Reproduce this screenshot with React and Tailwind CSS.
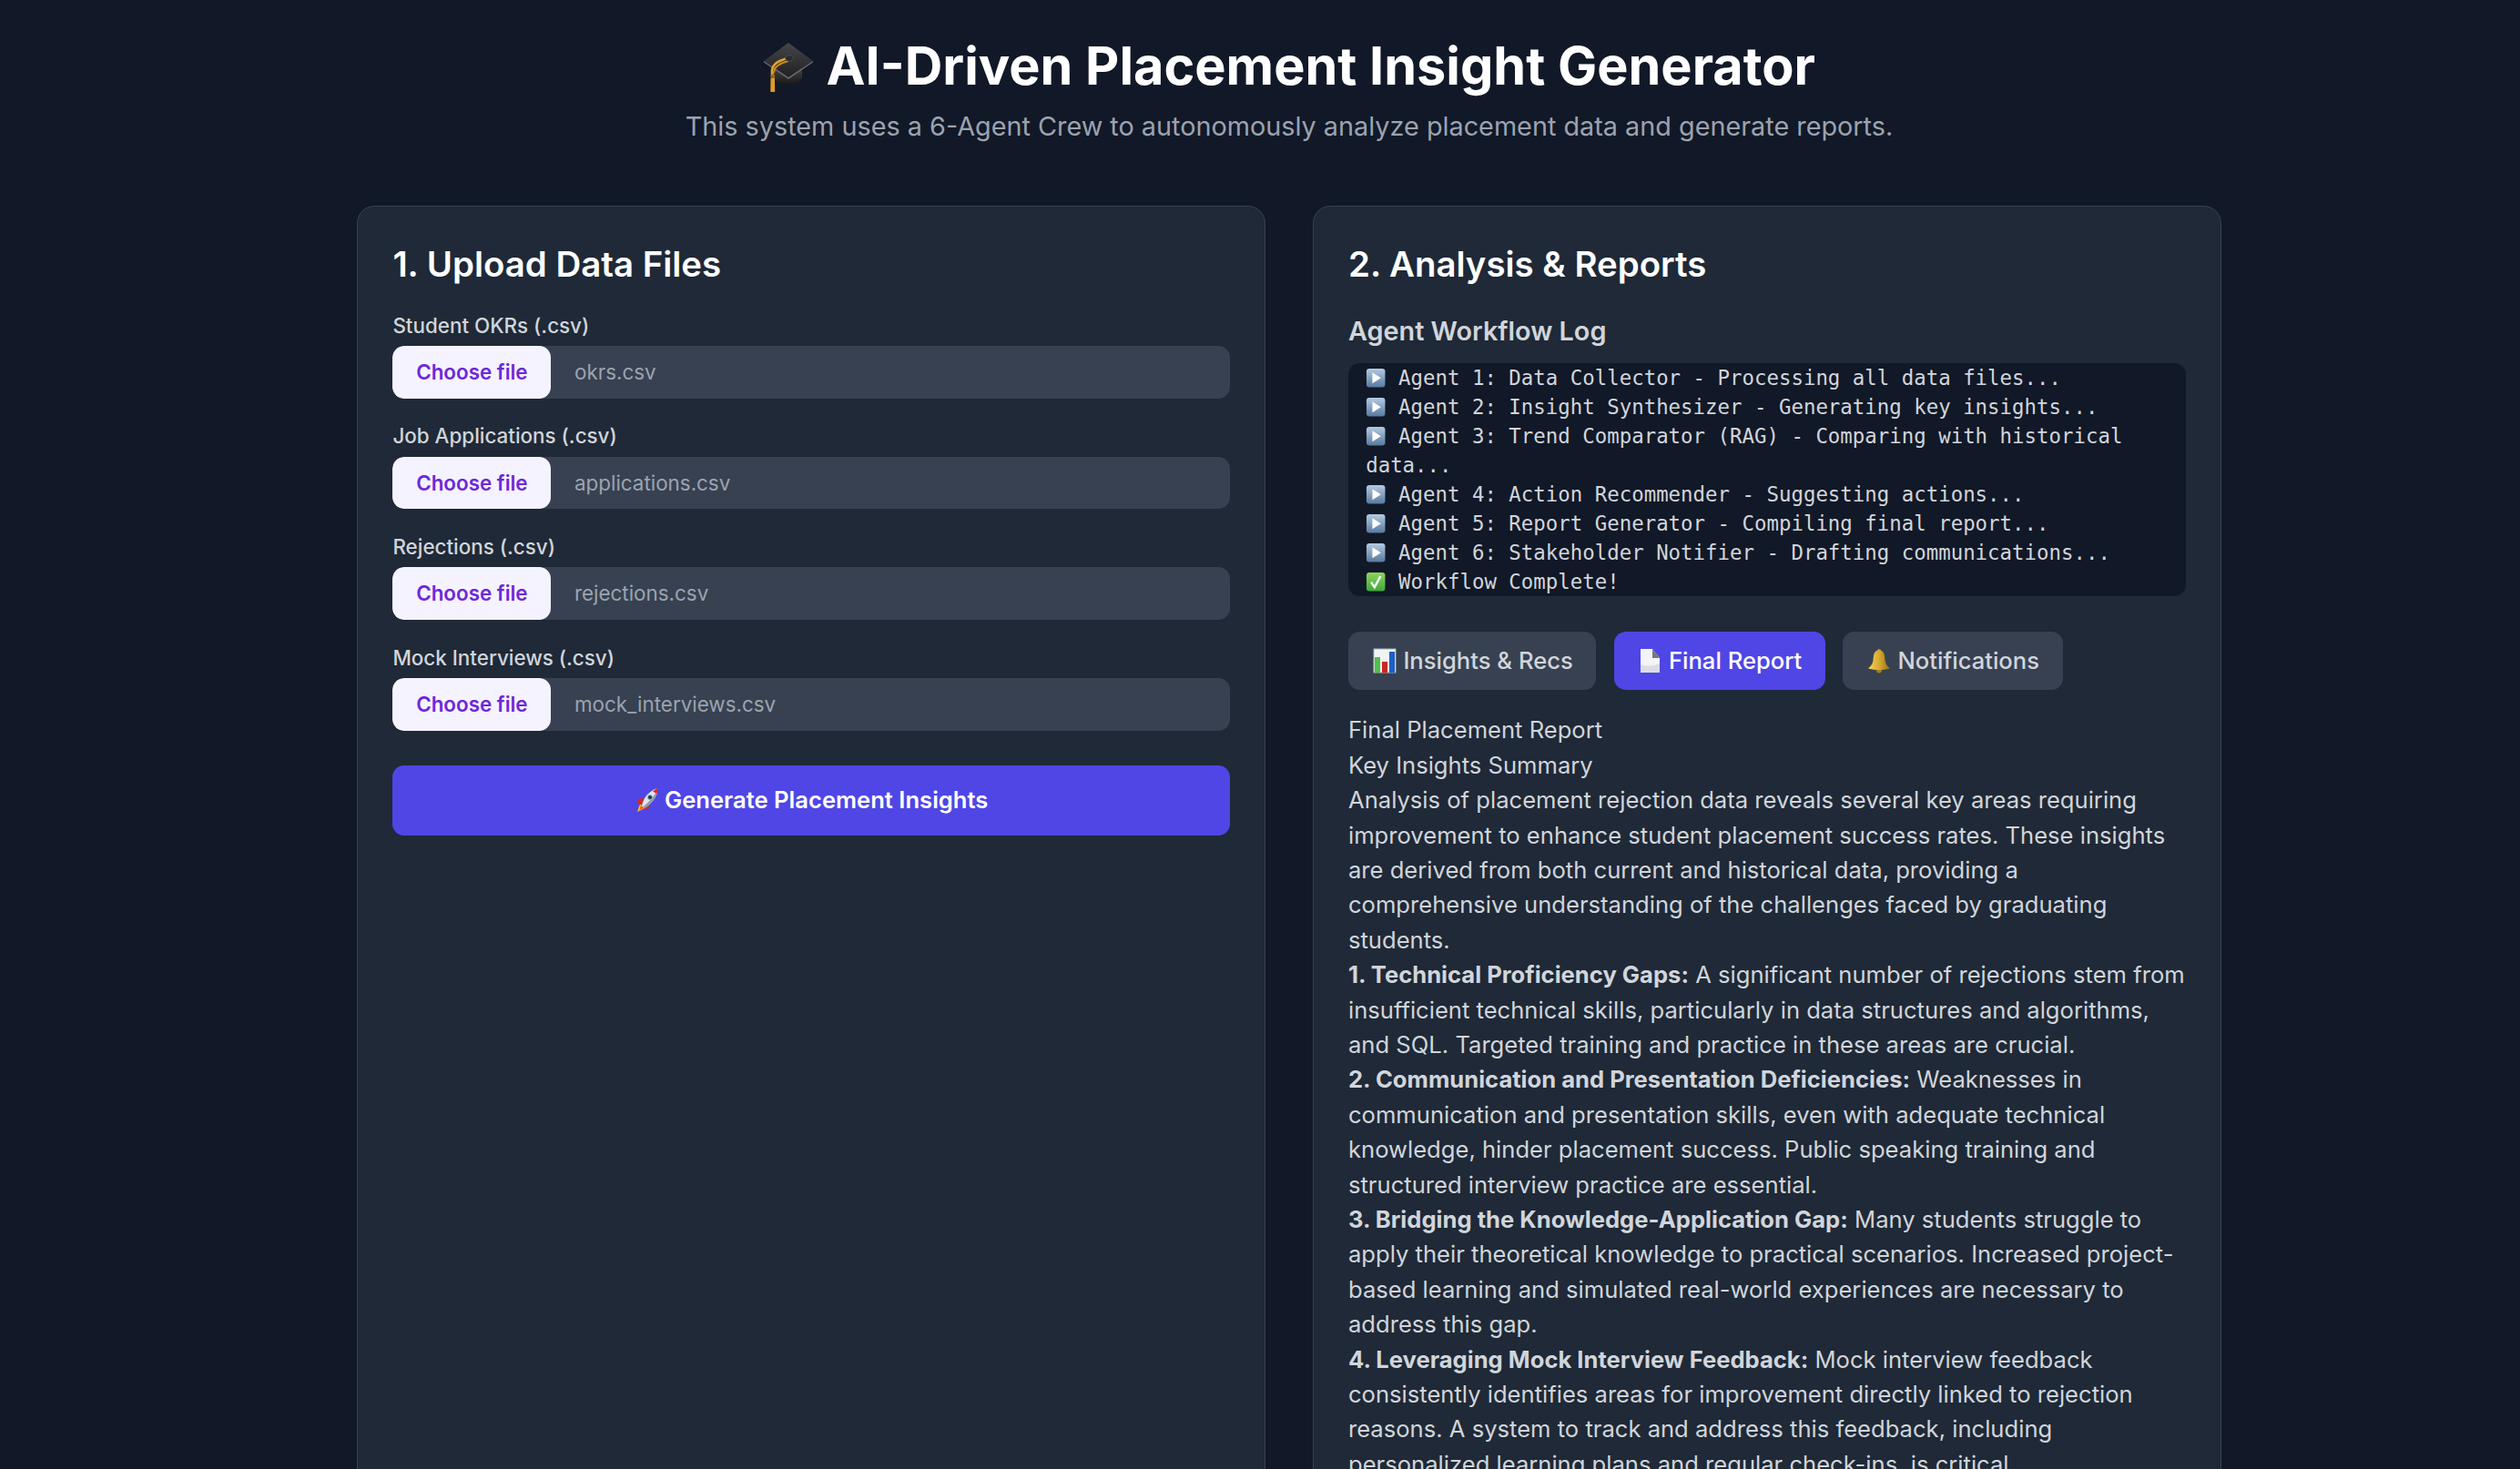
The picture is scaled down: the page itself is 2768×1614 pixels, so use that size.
import React from "react";

const Play = () => (
  <svg viewBox="0 0 24 24" className="inline-block w-[22.4px] h-[22.4px] align-[-3px]">
    <defs>
      <linearGradient id="pl" x1="0" y1="0" x2="0" y2="1">
        <stop offset="0" stopColor="#b4cbe2" />
        <stop offset="1" stopColor="#58799e" />
      </linearGradient>
    </defs>
    <rect x="1" y="1" width="22" height="22" rx="3.5" fill="url(#pl)" />
    <path d="M8 5.5 L18 12 L8 18.5 Z" fill="#fff" />
  </svg>
);

const Check = () => (
  <svg viewBox="0 0 24 24" className="inline-block w-[22.4px] h-[22.4px] align-[-3px]">
    <defs>
      <linearGradient id="ck" x1="0" y1="0" x2="0" y2="1">
        <stop offset="0" stopColor="#8ed65c" />
        <stop offset="1" stopColor="#3da83a" />
      </linearGradient>
    </defs>
    <rect x="1" y="1" width="22" height="22" rx="3.5" fill="url(#ck)" />
    <path d="M6.5 12.5 L10.5 18.5 L17.5 5.5" fill="none" stroke="#fff" strokeWidth="2.6" />
  </svg>
);

const Chart = () => (
  <svg viewBox="0 0 28 28" className="inline-block w-[28px] h-[28px] align-[-5px]">
    <rect x="2" y="1" width="24" height="26" fill="#f1f3f5" />
    <rect x="2" y="1" width="24" height="26" fill="none" stroke="#aab1ba" strokeWidth="1" />
    <rect x="3" y="10" width="6" height="17" fill="#4fc04a" />
    <rect x="11" y="15" width="6" height="12" fill="#c9281f" />
    <rect x="19" y="4" width="6" height="23" fill="#1f5fc4" />
  </svg>
);

const Page = () => (
  <svg viewBox="0 0 28 28" className="inline-block w-[28px] h-[28px] align-[-5px]">
    <path d="M4 1 H17 L25 11 V27 H4 Z" fill="#f4f4f6" />
    <path d="M4 18 Q14 22 25 17 V27 H4 Z" fill="#dcdce2" />
    <path d="M17 1 L25 11 H17 Z" fill="#77777f" />
  </svg>
);

const Bell = () => (
  <svg viewBox="0 0 28 28" className="inline-block w-[28px] h-[28px] align-[-5px]">
    <defs>
      <linearGradient id="bl" x1="0" y1="0" x2="1" y2="0">
        <stop offset="0" stopColor="#f3d35c" />
        <stop offset="0.55" stopColor="#d4a52d" />
        <stop offset="1" stopColor="#8f6a14" />
      </linearGradient>
    </defs>
    <circle cx="14" cy="3" r="2" fill="#b28a22" />
    <circle cx="14" cy="24.5" r="3" fill="#a57a1c" />
    <path d="M14 2 C8 3 8 8 7.5 13 C7 18 4.5 20 2 22.5 Q14 26 26 22.5 C23.5 20 21 18 20.5 13 C20 8 20 3 14 2 Z" fill="url(#bl)" />
  </svg>
);

const Rocket = () => (
  <svg viewBox="0 0 28 28" className="inline-block w-[28px] h-[28px] align-[-6px]">
    <path d="M3 27 L6 18 L11 23 Z" fill="#f6c21c" />
    <path d="M5.5 25 L7 20 L10 23 Z" fill="#e8601c" />
    <path d="M5 20 L3 14 L9 11 L9 17 Z" fill="#d42a1e" />
    <path d="M10 25 L15 23 L17 18 L11 20 Z" fill="#d42a1e" />
    <path d="M8 20 C10 11 16 4 25 1 C26 9 20 17 11 23 Z" fill="#dfe6ee" />
    <path d="M11 23 C20 17 26 9 25 1 C24 8 17 15 9.5 21.5 Z" fill="#8d99a8" />
    <path d="M20 4.5 C21.5 3 24 1.6 25 1 C25.3 2.6 25 5 24.5 7 Z" fill="#d42a1e" />
    <circle cx="17" cy="11" r="2.6" fill="#1e3a5f" stroke="#aeb8c4" strokeWidth="1" />
  </svg>
);

const Cap = () => (
  <svg viewBox="0 0 56 56" className="inline-block w-[56px] h-[56px] align-[-9px]">
    <defs>
      <linearGradient id="cp" x1="0" y1="0" x2="0" y2="1">
        <stop offset="0" stopColor="#45454a" />
        <stop offset="1" stopColor="#212124" />
      </linearGradient>
      <linearGradient id="cb" x1="0" y1="0" x2="0" y2="1">
        <stop offset="0" stopColor="#4a4a4c" />
        <stop offset="1" stopColor="#161617" />
      </linearGradient>
    </defs>
    <path d="M13 27 V40 C18 50 34 50 43 40 V27 Z" fill="url(#cb)" />
    <path d="M28 1 L55 21 L28 39 L1 21 Z" fill="url(#cp)" />
    <path d="M1 21 L28 39 L55 21 L55 22.5 L28 41 L1 22.5 Z" fill="#6a6a6e" />
    <path d="M28 18 C18 20 11 24 10 31 L10 37" fill="none" stroke="#e3a52f" strokeWidth="2.6" />
    <path d="M28 21 C20 23 13 26 12 33 L10.5 37" fill="none" stroke="#c98a20" strokeWidth="2" />
    <ellipse cx="29" cy="18" rx="4.2" ry="3.2" fill="#2a2a2c" stroke="#55555a" strokeWidth="0.8" />
    <rect x="8.5" y="36" width="4.6" height="4" fill="#8a6a2a" />
    <path d="M8.5 40 H13 L13.2 55 H8.3 Z" fill="#e09a2b" />
  </svg>
);

const inputs = [
  ["Student OKRs (.csv)", "okrs.csv"],
  ["Job Applications (.csv)", "applications.csv"],
  ["Rejections (.csv)", "rejections.csv"],
  ["Mock Interviews (.csv)", "mock_interviews.csv"],
];

const logs = [
  "Agent 1: Data Collector - Processing all data files...",
  "Agent 2: Insight Synthesizer - Generating key insights...",
  "Agent 3: Trend Comparator (RAG) - Comparing with historical data...",
  "Agent 4: Action Recommender - Suggesting actions...",
  "Agent 5: Report Generator - Compiling final report...",
  "Agent 6: Stakeholder Notifier - Drafting communications...",
];

const report = [
  ["Technical", "1. Technical Proficiency Gaps:", " A significant number of rejections stem from insufficient technical skills, particularly in data structures and algorithms, and SQL. Targeted training and practice in these areas are crucial."],
  ["Comm", "2. Communication and Presentation Deficiencies:", " Weaknesses in communication and presentation skills, even with adequate technical knowledge, hinder placement success. Public speaking training and structured interview practice are essential."],
  ["Gap", "3. Bridging the Knowledge-Application Gap:", " Many students struggle to apply their theoretical knowledge to practical scenarios. Increased project-based learning and simulated real-world experiences are necessary to address this gap."],
  ["Mock", "4. Leveraging Mock Interview Feedback:", " Mock interview feedback consistently identifies areas for improvement directly linked to rejection reasons. A system to track and address this feedback, including personalized learning plans and regular check-ins, is critical."],
];

const panel = "min-w-0 rounded-[19.2px] border-[1.6px] border-[#374151] bg-[#1f2937] p-[38.4px]";
const h2 = "text-[38.4px] leading-[51.2px] font-semibold text-white mb-[25.6px]";
const tab = "rounded-[12.8px] h-[64px] px-[25.6px] text-[25.6px] leading-[38.4px] font-medium";

export default function App() {
  return (
    <div className="h-[1614px] w-[2768px] overflow-hidden bg-[#111827] font-['Inter',sans-serif] text-[25.6px] leading-[38.4px] text-[#d1d5db] antialiased">
      <div className="ml-[392px] w-[2048px] pt-[40px]">
        <header className="mb-[64px] text-center">
          <h1 className="text-[57.6px] leading-[64px] font-bold text-white">
            <Cap /> AI-Driven Placement Insight Generator
          </h1>
          <p className="mt-[12.8px] text-[28.8px] leading-[44.8px] text-[#9ca3af]">
            This system uses a 6-Agent Crew to autonomously analyze placement data and generate reports.
          </p>
        </header>
        <div className="grid grid-cols-2 gap-[51.2px]">
          <section className={panel}>
            <h2 className={h2}>1. Upload Data Files</h2>
            <div className="flex flex-col gap-[25.6px]">
              {inputs.map(([label, file]) => (
                <div key={label}>
                  <div className="mb-[6.4px] text-[22.4px] leading-[32px] font-medium text-[#d1d5db]">{label}</div>
                  <div className="flex h-[57.6px] items-center overflow-hidden rounded-[12.8px] bg-[#374151] text-[22.4px] leading-[32px] text-[#9ca3af]">
                    <span className="flex h-full w-[174px] items-center justify-center rounded-[12.8px] bg-[#f5f3ff] font-semibold text-[#6d28d9]">Choose file</span>
                    <span className="ml-[25.6px]">{file}</span>
                  </div>
                </div>
              ))}
            </div>
            <button className="mt-[38.4px] flex h-[76.8px] w-full items-center justify-center gap-[5px] rounded-[12.8px] bg-[#4f46e5] font-semibold text-white">
              <Rocket /> <span>Generate Placement Insights</span>
            </button>
          </section>
          <section className={panel}>
            <h2 className={h2}>2. Analysis &amp; Reports</h2>
            <h3 className="mb-[12.8px] text-[28.8px] leading-[44.8px] font-semibold text-[#d1d5db]">Agent Workflow Log</h3>
            <div className="rounded-[12.8px] bg-[#111827] px-[19.2px] font-['DejaVu_Sans_Mono',monospace] text-[22.4px] leading-[32px] text-[#d1d5db]">
              {logs.map((l) => (
                <div key={l}><Play /> {l}</div>
              ))}
              <div><Check /> Workflow Complete!</div>
            </div>
            <div className="mt-[38.4px] flex gap-[19.2px]">
              <button className={`${tab} bg-[#374151] text-[#d1d5db]`}><Chart /> Insights &amp; Recs</button>
              <button className={`${tab} bg-[#4f46e5] text-white`}><Page /> Final Report</button>
              <button className={`${tab} bg-[#374151] text-[#d1d5db]`}><Bell /> Notifications</button>
            </div>
            <div className="mt-[25.6px]">
              <div>Final Placement Report</div>
              <div>Key Insights Summary</div>
              <div>Analysis of placement rejection data reveals several key areas requiring improvement to enhance student placement success rates. These insights are derived from both current and historical data, providing a comprehensive understanding of the challenges faced by graduating students.</div>
              {report.map(([k, b, t]) => (
                <div key={k}><strong className="font-bold">{b}</strong>{t}</div>
              ))}
            </div>
          </section>
        </div>
      </div>
    </div>
  );
}
